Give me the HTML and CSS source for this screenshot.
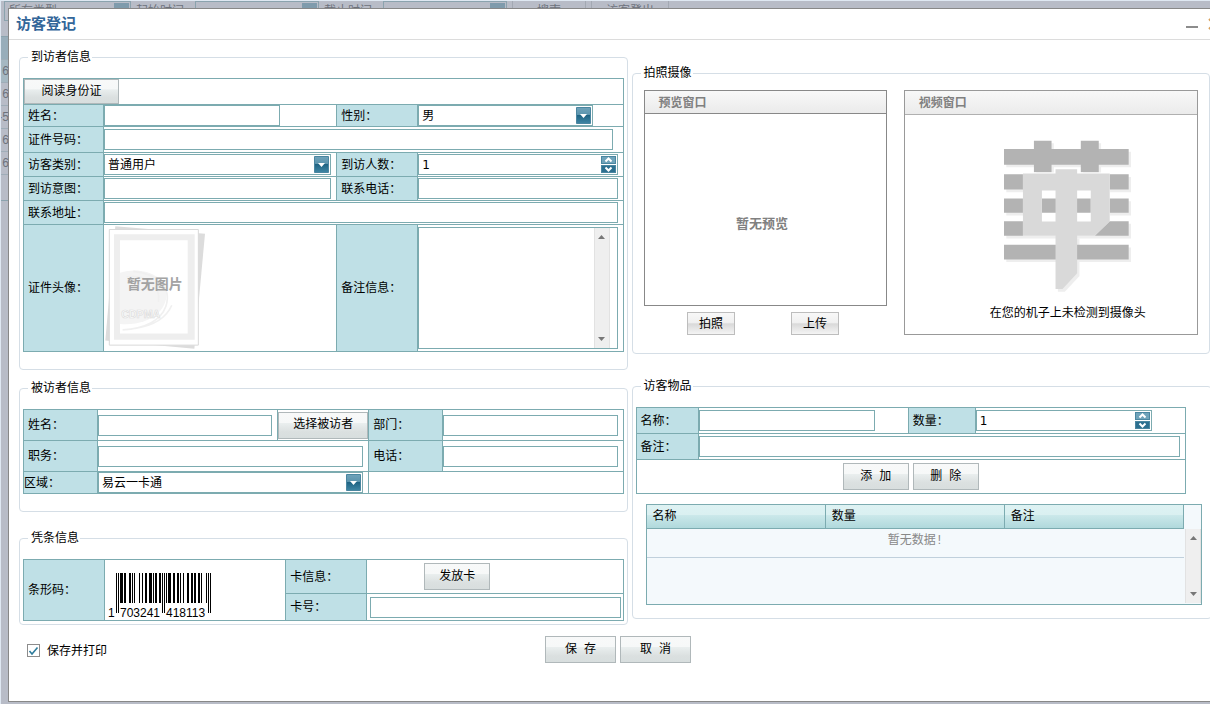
FILE: index.html
```html
<!DOCTYPE html>
<html lang="zh-CN">
<head>
<meta charset="utf-8">
<title>访客登记</title>
<link rel="stylesheet" href="styles.css">
</head>
<body>
<div class="page">
  <div class="backdrop" aria-hidden="true">
    <div class="toolbar">
      <span class="bar-combo type">所有类型<i></i></span>
      <span class="bar-label">起始时间</span>
      <span class="bar-combo"><i></i></span>
      <span class="bar-label">截止时间</span>
      <span class="bar-combo"><i></i></span>
      <span class="bar-btn">搜索</span>
      <span class="bar-btn">访客登出</span>
    </div>
    <div class="rows">
      <span class="row head"></span>
      <span class="row active">6</span>
      <span class="row">6</span>
      <span class="row">-5</span>
      <span class="row">6</span>
      <span class="row">6</span>
      <span class="row"></span>
    </div>
  </div>

  <section class="dialog" role="dialog" aria-labelledby="dlg-title">
    <header class="dialog-head">
      <h1 id="dlg-title">访客登记</h1>
      <div class="window-tools">
        <button type="button" class="tool" aria-label="最小化"><svg width="12" height="12" viewBox="0 0 12 12"><path d="M0 8h12v2H0z" fill="#8c8c8c"/></svg></button>
        <button type="button" class="tool" aria-label="关闭"><svg width="12" height="12" viewBox="0 0 12 12"><path d="M1 1l10 10M11 1L1 11" stroke="#d9a05a" stroke-width="2"/></svg></button>
      </div>
    </header>

    <form class="dialog-body">
      <div class="columns">
        <div class="col-left">
          <fieldset class="group">
            <legend>到访者信息</legend>
            <div class="sheet visitor">
              <div class="cell span-all"><button type="button" class="btn read-card">阅读身份证</button></div>

              <label class="cell name" for="v-name">姓名：</label>
              <div class="cell"><input class="field fixed" id="v-name" type="text"></div>
              <label class="cell name" for="v-sex">性别：</label>
              <div class="cell"><span class="combo fixed"><select id="v-sex"><option>男</option></select><svg class="arrow" viewBox="0 0 15 17"><use href="#drop"/></svg></span></div>

              <label class="cell name" for="v-id">证件号码：</label>
              <div class="cell span-3 end-lg"><input class="field" id="v-id" type="text"></div>

              <label class="cell name" for="v-type">访客类别：</label>
              <div class="cell end"><span class="combo"><select id="v-type"><option>普通用户</option></select><svg class="arrow" viewBox="0 0 15 17"><use href="#drop"/></svg></span></div>
              <label class="cell name" for="v-count">到访人数：</label>
              <div class="cell end"><span class="spin"><input id="v-count" type="text" value="1"><span class="steps"><button type="button" aria-label="增加"><svg viewBox="1 1 13 6"><path d="M4.500 5.500l3-3 3 3"/></svg></button><button type="button" aria-label="减少"><svg viewBox="1 1 13 6"><path d="M4.500 2.500l3 3 3-3"/></svg></button></span></span></div>

              <label class="cell name" for="v-purpose">到访意图：</label>
              <div class="cell end"><input class="field" id="v-purpose" type="text"></div>
              <label class="cell name" for="v-phone">联系电话：</label>
              <div class="cell end"><input class="field" id="v-phone" type="text"></div>

              <label class="cell name" for="v-addr">联系地址：</label>
              <div class="cell span-3 end"><input class="field" id="v-addr" type="text"></div>

              <div class="cell name">证件头像：</div>
              <div class="cell">
                <svg class="portrait" width="101" height="125" viewBox="312 135 304 375" role="img" aria-label="暂无图片">
                  <path d="M346 138l270 23-32 346-268-25z" fill="#dcdcdc"/>
                  <path d="M328 148h268v348H328z" fill="#fff" stroke="#d9d9d9" stroke-width="3"/>
                  <path d="M342 162h243v318H342z" fill="#eee"/>
                  <path d="M360 180h204v281H360z" fill="#fff"/>
                  <path d="M360 278c70-20 135 8 140 62 3 50-50 100-140 92z" fill="#f4f4f4"/>
                  <path d="M400 274c60 6 120 40 98 106-14 40-60 66-130 70M516 376c-18 42-60 62-110 70M380 290c60-8 104 30 96 76" fill="none" stroke="#f0f0f0" stroke-width="5"/>
                  <text class="portrait-brand" x="364" y="415">CDPMA</text>
                  <text class="portrait-note" x="381" y="328">暂无图片</text>
                </svg>
              </div>
              <label class="cell name" for="v-note">备注信息：</label>
              <div class="cell end"><span class="memo"><textarea id="v-note"></textarea><span class="scroll"><svg width="7" height="4" viewBox="0 0 7 4"><path d="M3.500 0L7 4H0z"/></svg><svg width="7" height="4" viewBox="0 0 7 4"><path d="M0 0h7L3.500 4z"/></svg></span></span></div>
            </div>
          </fieldset>

          <fieldset class="group">
            <legend>被访者信息</legend>
            <div class="sheet host">
              <label class="cell name" for="h-name">姓名：</label>
              <div class="cell end"><input class="field" id="h-name" type="text"></div>
              <div class="cell"><button type="button" class="btn fill">选择被访者</button></div>
              <label class="cell name" for="h-dept">部门：</label>
              <div class="cell end"><input class="field" id="h-dept" type="text"></div>

              <label class="cell name" for="h-job">职务：</label>
              <div class="cell span-2 end"><input class="field" id="h-job" type="text"></div>
              <label class="cell name" for="h-tel">电话：</label>
              <div class="cell end"><input class="field" id="h-tel" type="text"></div>

              <label class="cell name flush" for="h-area">区域：</label>
              <div class="cell span-2 end"><span class="combo"><select id="h-area"><option>易云一卡通</option></select><svg class="arrow" viewBox="0 0 15 17"><use href="#drop"/></svg></span></div>
              <div class="cell span-2"></div>
            </div>
          </fieldset>

          <fieldset class="group slip-group">
            <legend>凭条信息</legend>
            <div class="sheet slip">
              <div class="cell name tall">条形码：</div>
              <div class="cell tall code">
                <svg width="106" height="46" viewBox="0 0 106 46" role="img" aria-label="条形码 1703241418113">
                  <g transform="translate(8 0)">
                    <path d="M4 0h3v30h-3zM8 0h2v30h-2zM13 0h2v30h-2zM16 0h1v30h-1zM18 0h1v30h-1zM23 0h1v30h-1zM26 0h1v30h-1zM29 0h2v30h-2zM33 0h3v30h-3zM37 0h1v30h-1zM39 0h2v30h-2zM43 0h2v30h-2zM50 0h1v30h-1zM52 0h3v30h-3zM57 0h2v30h-2zM61 0h2v30h-2zM64 0h1v30h-1zM67 0h1v30h-1zM71 0h2v30h-2zM75 0h2v30h-2zM78 0h2v30h-2zM82 0h2v30h-2zM85 0h1v30h-1zM90 0h1v30h-1z"/>
                    <path d="M0 0h1v40h-1zM2 0h1v40h-1zM46 0h1v40h-1zM48 0h1v40h-1zM92 0h1v40h-1zM94 0h1v40h-1z"/>
                  </g>
                  <text x="0" y="44">1</text><text x="12" y="44">703241</text><text x="58" y="44">418113</text>
                </svg>
              </div>
              <div class="cell name">卡信息：</div>
              <div class="cell center"><button type="button" class="btn issue">发放卡</button></div>
              <label class="cell name" for="c-no">卡号：</label>
              <div class="cell inset"><input class="field" id="c-no" type="text"></div>
            </div>
          </fieldset>
        </div>

        <div class="col-right">
          <fieldset class="group camera-group">
            <legend>拍照摄像</legend>
            <div class="cameras">
              <div class="camera">
                <div class="screen dark">
                  <h2>预览窗口</h2>
                  <p class="no-preview">暂无预览</p>
                </div>
                <div class="shots">
                  <button type="button" class="btn-grey">拍照</button>
                  <button type="button" class="btn-grey">上传</button>
                </div>
              </div>
              <div class="screen">
                <h2>视频窗口</h2>
                <div class="no-camera">
                  <svg width="133" height="157" viewBox="330 410 400 470" aria-hidden="true">
                    <g fill="#eee" transform="translate(7 8)">
                      <path d="M339 445h90v-25h53v25h88v-25h54v25h90v47h-90v23h-54v-23h-88v23h-53v-23h-90zM339 521h375v46H339zM339 594h375v43H339zM339 662h375v44H339zM339 733h375v44H339z"/>
                      <path d="M494 706h65v113l-44 47h-21z"/>
                    </g>
                    <path fill="#b3b3b3" d="M339 445h90v-25h53v25h88v-25h54v25h90v47h-90v23h-54v-23h-88v23h-53v-23h-90z"/>
                    <path fill="#fff" d="M396 516h262v190H396z"/>
                    <path fill="#b3b3b3" d="M339 521h57v46h-57zM657 521h57v46h-57zM339 594h57v43h-57zM453 594h147v43H453zM657 594h57v43h-57zM339 662h57v44h-57zM657 662h57v44H612l45-44zM339 733h375v44H339z"/>
                    <path fill="#d9d9d9" fill-rule="evenodd" d="M396 519h98v-13h65v13h98v144l-45 43h-53v113l-44 47h-21V706h-98zM453 570v93h41v-93zM559 570v93h41v-93z"/>
                  </svg>
                  <p>在您的机子上未检测到摄像头</p>
                </div>
              </div>
            </div>
          </fieldset>

          <fieldset class="group goods-group">
            <legend>访客物品</legend>
            <div class="sheet goods">
              <label class="cell name" for="g-name">名称：</label>
              <div class="cell"><input class="field fixed" id="g-name" type="text"></div>
              <label class="cell name" for="g-count">数量：</label>
              <div class="cell"><span class="spin fixed"><input id="g-count" type="text" value="1"><span class="steps"><button type="button" aria-label="增加"><svg viewBox="1 1 13 6"><path d="M4.500 5.500l3-3 3 3"/></svg></button><button type="button" aria-label="减少"><svg viewBox="1 1 13 6"><path d="M4.500 2.500l3 3 3-3"/></svg></button></span></span></div>
              <label class="cell name" for="g-note">备注：</label>
              <div class="cell span-3 end"><input class="field" id="g-note" type="text"></div>
              <div class="cell span-all center pair">
                <button type="button" class="btn">添 加</button>
                <button type="button" class="btn">删 除</button>
              </div>
            </div>

            <div class="list">
              <table>
                <thead><tr><th>名称</th><th>数量</th><th>备注</th></tr></thead>
                <tbody><tr><td colspan="3">暂无数据!</td></tr></tbody>
              </table>
              <span class="scroll"><svg width="7" height="4" viewBox="0 0 7 4"><path d="M3.500 0L7 4H0z"/></svg><svg width="7" height="4" viewBox="0 0 7 4"><path d="M0 0h7L3.500 4z"/></svg></span>
            </div>
          </fieldset>
        </div>
      </div>

      <footer class="dialog-foot">
        <label class="check"><input type="checkbox" checked>保存并打印</label>
        <div class="pair">
          <button type="submit" class="btn wide">保 存</button>
          <button type="button" class="btn wide">取 消</button>
        </div>
      </footer>
    </form>
  </section>
</div>

<svg class="defs" width="0" height="0" aria-hidden="true">
  <defs>
    <linearGradient id="drop-fill" x1="0" y1="0" x2="0" y2="1">
      <stop offset="0" stop-color="#6fa3ba"/><stop offset=".48" stop-color="#5a93ac"/>
      <stop offset=".5" stop-color="#1f6484"/><stop offset="1" stop-color="#3f86a4"/>
    </linearGradient>
    <g id="drop"><path d="M.5.5h14v16H.5z" fill="url(#drop-fill)" stroke="#4a86a0"/><path d="M4 7h7L7.500 11z" fill="#fff"/></g>
  </defs>
</svg>
</body>
</html>
```
FILE: styles.css
```css
:root {
  --line: #7cabb0;
  --label: #bfe0e6;
  --group: #d5dee6;
}

* { box-sizing: border-box; }

body {
  margin: 0;
  color: #000;
  font: 12px/14px "Liberation Sans", "Noto Sans CJK SC", sans-serif;
}

button, input, select, textarea { margin: 0; font: inherit; color: inherit; }
h1, h2, p { margin: 0; }

.page {
  position: relative;
  min-height: 100vh;
  padding: 7px 0 2px 7px;
  overflow: hidden;
  background: #b8bcc7;
  border-top: 1px solid #dfe8f2;
  border-left: 1px solid #dfe8f2;
}

.defs { position: absolute; }

/* Dimmed page behind the dialog */
.backdrop { position: absolute; inset: 0; color: #6d727c; }
.toolbar { display: flex; gap: 5px; padding-left: 3px; height: 20px; line-height: 20px; }
.bar-combo {
  display: flex;
  justify-content: space-between;
  width: 124px;
  padding: 1px 1px 1px 4px;
  border: 1px solid #8ba3ae;
  line-height: 16px;
}
.bar-combo.type { width: 127px; }
.bar-combo i { width: 15px; margin-left: auto; background: #7f9bac; }
.bar-label { width: 54px; }
.bar-btn { padding: 0 14px; border: 1px solid #a3a9b3; border-width: 0 1px; }
.bar-btn:nth-last-child(2) { padding: 0 24px; }
.rows { width: 8px; padding-top: 15px; overflow: hidden; }
.row { display: flex; justify-content: flex-end; height: 23px; line-height: 23px; border-bottom: 1px solid #9fadb8; }
.row.head { height: 24px; background: #98adba; border-top: 1px solid #8ba3ae; }
.row.active { background: #a5b8c2; }
.row:last-child { height: 26px; border-color: #8ba3ae; }

/* Dialog */
.dialog {
  position: relative;
  margin-right: -18px;
  background: #fff;
  border: 1px solid #888;
}
.dialog-head {
  display: flex;
  align-items: center;
  justify-content: space-between;
  height: 31px;
  padding: 0 7px;
  border-bottom: 1px solid #dcdcdc;
}
.dialog-head h1 { font-size: 15px; line-height: 28px; color: #369; }
.window-tools { display: flex; gap: 10px; }
.tool { display: block; padding: 0; border: 0; background: none; }
.tool svg { display: block; }
.dialog-body { margin: 0; padding: 10px 15px 38px 10px; }
.columns { display: grid; grid-template-columns: 608fr 580fr; gap: 4px; }
.col-right { padding-top: 16px; }

/* Groups */
.group {
  min-width: 0;
  margin: 0 0 11px;
  padding: 14px 3px 17px;
  border: 1px solid var(--group);
  border-radius: 4px;
}
.group + .group { margin-top: 11px; }
.group legend { margin-left: 5px; padding: 0 1px 0 3px; line-height: 14px; }
.group.slip-group { margin: 19px 0 0; padding-bottom: 3px; }
.group.camera-group { margin: 0 2px 0 0; padding: 10px 11px 18px; }
.group.camera-group legend { margin-left: -3px; }
.group.goods-group { margin: 25px 0 0; padding-bottom: 13px; }

/* Ruled form grid */
.sheet {
  display: grid;
  gap: 1px;
  background: var(--line);
  border: 1px solid var(--line);
}
.visitor {
  grid-template-columns: 79px 232fr 80px 204fr;
  grid-template-rows: 25px 21px 25px 23px 23px 23px 126px;
}
.host {
  grid-template-columns: 73px 179fr 90px 73px 179fr;
  grid-template-rows: 30px 30px 21px;
}
.slip {
  grid-template-columns: 80px 180fr 80px 255fr;
  grid-template-rows: 33px 26px;
}
.goods {
  grid-template-columns: 61px 209fr 66px 209fr;
  grid-template-rows: 25px 25px 33px;
  margin-right: 22px;
}
.cell { display: flex; align-items: center; min-width: 0; background: #fff; }
.cell.name { padding-left: 4px; background: var(--label); }
.cell.name.flush { padding-left: 0; }
.cell.end { padding-right: 5px; }
.cell.end-lg { padding-right: 10px; }
.cell.inset { padding: 0 2px 0 3px; }
.cell.center { justify-content: center; }
.cell.tall { grid-row: span 2; }
.cell.code { align-items: flex-end; padding: 0 0 1px 3px; }
.code text { font-size: 12px; }
.slip .center { padding-right: 75px; }
.span-2 { grid-column: span 2; }
.span-3 { grid-column: span 3; }
.span-all { grid-column: 1 / -1; }

/* Controls */
.field, .combo, .spin {
  display: flex;
  position: relative;
  width: 100%;
  height: 21px;
  background: #fff;
  border: 1px solid var(--line);
}
.field { padding: 0 4px; }
.fixed { width: 176px; }
.combo.fixed { width: 175px; }
.combo select {
  width: 100%;
  padding: 0 20px 0 3px;
  border: 0;
  background: none;
  appearance: none;
}
.arrow { position: absolute; right: 1px; top: 1px; width: 15px; height: 17px; pointer-events: none; }
.spin input {
  flex: 1;
  min-width: 0;
  padding: 0 3px;
  border: 0;
  background: none;
  font-family: "DejaVu Sans", sans-serif;
}
.steps { display: grid; gap: 1px; width: 15px; margin: 1px; }
.steps button { padding: 0; border: 1px solid #4a86a0; background: #6fa3ba; }
.steps button + button { background: #2d7090; }
.steps svg { display: block; width: 13px; height: 6px; fill: none; stroke: #fff; stroke-width: 2; }
.memo {
  display: flex;
  width: 100%;
  height: 122px;
  padding-right: 7px;
  border: 1px solid var(--line);
}
.memo textarea { flex: 1; min-width: 0; padding: 3px; border: 0; resize: none; }
.scroll {
  display: flex;
  flex-direction: column;
  align-items: center;
  justify-content: space-between;
  width: 16px;
  padding: 7px 0;
  background: #efefef;
  border: 1px solid #e2e2e2;
  border-width: 0 1px;
  fill: #777;
}
.scroll svg { display: block; }

.btn {
  min-width: 66px;
  height: 27px;
  padding: 0 6px;
  border: 1px solid #b0b8ba;
  background: linear-gradient(#f8f9f9, #f6f8f8 40%, #e9eeee 42%, #dbe0e0 75%, #d8dede);
  font-family: "Liberation Mono", "Noto Sans CJK SC", monospace;
}
.btn.read-card { width: 95px; height: 25px; }
.btn.fill { width: 100%; padding: 0; }
.btn.wide { width: 71px; }
.pair { gap: 4px; }

.portrait { display: block; align-self: flex-start; }
.portrait-note { font: bold 42px "Noto Sans CJK SC", sans-serif; fill: #a3a3a3; }
.portrait-brand { font: bold 32px "Liberation Sans", sans-serif; fill: #fff; stroke: #dcdcdc; stroke-width: 2; }

/* Camera */
.cameras { display: grid; grid-template-columns: 243fr 294fr; gap: 17px; }
.camera { display: flex; flex-direction: column; }
.screen { border: 1px solid #999; }
.screen.dark { display: flex; flex: 1; flex-direction: column; border-color: #888; }
.screen h2 {
  height: 24px;
  padding-left: 14px;
  border-bottom: 1px solid #b0b0b0;
  background: linear-gradient(#f8f8f8, #ebebeb);
  color: #808080;
  font-size: 12px;
  line-height: 24px;
}
.screen.dark h2 { height: 23px; border-color: #888; }
.no-preview { margin: auto; padding: 28px 6px 0 0; color: #808080; font-size: 13px; font-weight: bold; }
.shots { display: flex; justify-content: center; gap: 56px; padding: 6px 4px 0 0; }
.btn-grey {
  width: 48px;
  height: 23px;
  padding: 0;
  border: 1px solid #bdbdbd;
  background: linear-gradient(#f8f8f8, #f0f0f0 45%, #d9d9d9 52%, #f4f4f4);
}
.no-camera {
  display: flex;
  flex-direction: column;
  align-items: center;
  padding: 22px 0 14px 34px;
}
.no-camera p { margin-top: 12px; }
.no-camera svg { display: block; }

/* Goods list */
.list {
  display: flex;
  height: 101px;
  margin: 10px 6px 0 10px;
  border: 1px solid var(--line);
  background: #f4f9fc;
}
.list table { flex: 1; align-self: flex-start; border-collapse: separate; border-spacing: 0; table-layout: fixed; width: 100%; }
.list th {
  height: 24px;
  padding: 0 6px 2px;
  border: 1px solid var(--line);
  border-width: 0 1px 1px 0;
  background: linear-gradient(#def2f3, #daf0f1 43%, #cbe8ea 45%, #b0d9dc);
  font-weight: normal;
  text-align: left;
}
.list td {
  height: 29px;
  padding: 0 0 4px;
  border-bottom: 1px solid #c0d0dc;
  color: #888;
  font-family: "Liberation Mono", "Noto Sans CJK SC", monospace;
  text-align: center;
}
.list .scroll { flex: none; margin: 24px 0 1px 1px; }

/* Footer */
.dialog-foot {
  display: grid;
  grid-template-columns: 1fr auto 1fr;
  align-items: center;
  padding: 11px 0 0 5px;
}
.dialog-foot .pair { display: flex; }
.check { display: flex; align-items: center; gap: 7px; padding: 2px 0 0 3px; }
.check input {
  width: 13px;
  height: 13px;
  border: 1px solid #8c8c8c;
  background: #fff;
  appearance: none;
}
.check input:checked {
  background: #fff url("data:image/svg+xml,%3Csvg xmlns='http://www.w3.org/2000/svg' viewBox='0 0 11 11'%3E%3Cpath d='M1.500 6l2.500 3 5.500-6.500' fill='none' stroke='%232e7c9c' stroke-width='1.600'/%3E%3C/svg%3E");
}
```
